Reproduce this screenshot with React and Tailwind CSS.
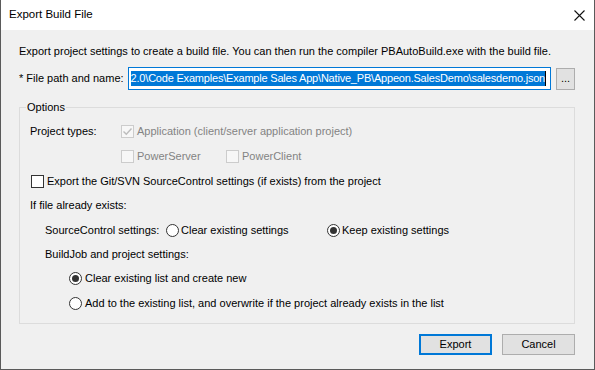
import React from 'react';

const font = { fontFamily: '"Segoe UI", "Liberation Sans", Arial, sans-serif' };

const CheckBox = ({ checked = false, disabled = false }) => (
  <span
    className={`w-[13px] h-[13px] shrink-0 border flex items-center justify-center ${
      disabled ? 'border-[#cccccc] bg-[#f7f7f7]' : 'border-[#333333] bg-white'
    }`}
  >
    {checked && (
      <svg width="11" height="11" viewBox="0 0 11 11">
        <path d="M1.5 5.5 L4.3 8.3 L9.5 2.5" fill="none" stroke={disabled ? '#bcbcbc' : '#333'} strokeWidth="1.4" />
      </svg>
    )}
  </span>
);

const Radio = ({ checked = false }) => (
  <span className="w-[13px] h-[13px] shrink-0 rounded-full border border-[#333333] bg-white flex items-center justify-center">
    {checked && <span className="w-[7px] h-[7px] rounded-full bg-[#333333]" />}
  </span>
);

const App = () => {
  return (
    <div
      className="w-[595px] h-[370px] bg-[#f0f0f0] border-l border-r border-b border-[#5a5a5a] flex flex-col text-[11px] text-black leading-none whitespace-nowrap"
      style={font}
    >
      {/* Title bar */}
      <div className="h-[30px] bg-white flex items-center justify-between pl-[8px] pr-[9px] shrink-0">
        <span className="text-[11.5px] text-black">Export Build File</span>
        <svg width="11" height="11" viewBox="0 0 11 11">
          <path d="M0.5 0.5 L10.5 10.5 M10.5 0.5 L0.5 10.5" stroke="#111" strokeWidth="1.1" />
        </svg>
      </div>

      <div className="flex flex-col pl-[18px] pr-[19px]">
        <div className="h-[16px] mt-[13px] flex items-center">
          Export project settings to create a build file. You can then run the compiler PBAutoBuild.exe with the build file.
        </div>

        {/* File path row */}
        <div className="flex items-center mt-[8px] h-[23px]">
          <span className="w-[109px] shrink-0">* File path and name:</span>
          <div className="w-[424px] h-[23px] border border-[#0078d7] bg-white flex items-center justify-end overflow-hidden pr-[4px]">
            <span className="bg-[#0078d7] text-white h-[15px] flex items-center tracking-[-0.2px]">
              2.0\Code Examples\Example Sales App\Native_PB\Appeon.SalesDemo\salesdemo.json
            </span>
            <span className="w-[1px] h-[15px] bg-black shrink-0" />
          </div>
          <button className="ml-[5px] w-[19px] h-[22px] bg-[#e1e1e1] border border-[#adadad] flex items-end justify-center pb-[5px] text-[11px]">
            ...
          </button>
        </div>

        {/* Options group */}
        <fieldset className="mt-[10px] border border-[#dcdcdc] h-[224px] pl-[10px] pr-[8px]">
          <legend className="-ml-[4px] px-[1px] text-[11px] leading-[14px]">Options</legend>

          <div className="flex items-center h-[16px] mt-[9px]">
            <span className="w-[91px] shrink-0">Project types:</span>
            <CheckBox checked disabled />
            <span className="ml-[3px] text-[#838383]">Application (client/server application project)</span>
          </div>

          <div className="flex items-center h-[16px] mt-[9px] pl-[91px]">
            <CheckBox disabled />
            <span className="ml-[3px] text-[#838383] w-[89px]">PowerServer</span>
            <CheckBox disabled />
            <span className="ml-[3px] text-[#838383]">PowerClient</span>
          </div>

          <div className="flex items-center h-[16px] mt-[9px] pl-[1px]">
            <CheckBox />
            <span className="ml-[3px]">Export the Git/SVN SourceControl settings (if exists) from the project</span>
          </div>

          <div className="flex items-center h-[16px] mt-[8px]">If file already exists:</div>

          <div className="flex items-center h-[16px] mt-[9px] pl-[15px]">
            <span className="w-[121px] shrink-0">SourceControl settings:</span>
            <Radio />
            <span className="ml-[2px] w-[146px]">Clear existing settings</span>
            <Radio checked />
            <span className="ml-[2px]">Keep existing settings</span>
          </div>

          <div className="flex items-center h-[16px] mt-[8px] pl-[15px]">BuildJob and project settings:</div>

          <div className="flex items-center h-[16px] mt-[8px] pl-[39px]">
            <Radio checked />
            <span className="ml-[3px]">Clear existing list and create new</span>
          </div>

          <div className="flex items-center h-[16px] mt-[9px] pl-[39px]">
            <Radio />
            <span className="ml-[3px]">Add to the existing list, and overwrite if the project already exists in the list</span>
          </div>
        </fieldset>

        {/* Buttons */}
        <div className="flex justify-end gap-[10px] mt-[10px]">
          <button className="w-[73px] h-[21px] bg-[#e1e1e1] border-2 border-[#0078d7] flex items-center justify-center">
            Export
          </button>
          <button className="w-[73px] h-[21px] bg-[#e1e1e1] border border-[#adadad] flex items-center justify-center">
            Cancel
          </button>
        </div>
      </div>
    </div>
  );
};

export default App;
